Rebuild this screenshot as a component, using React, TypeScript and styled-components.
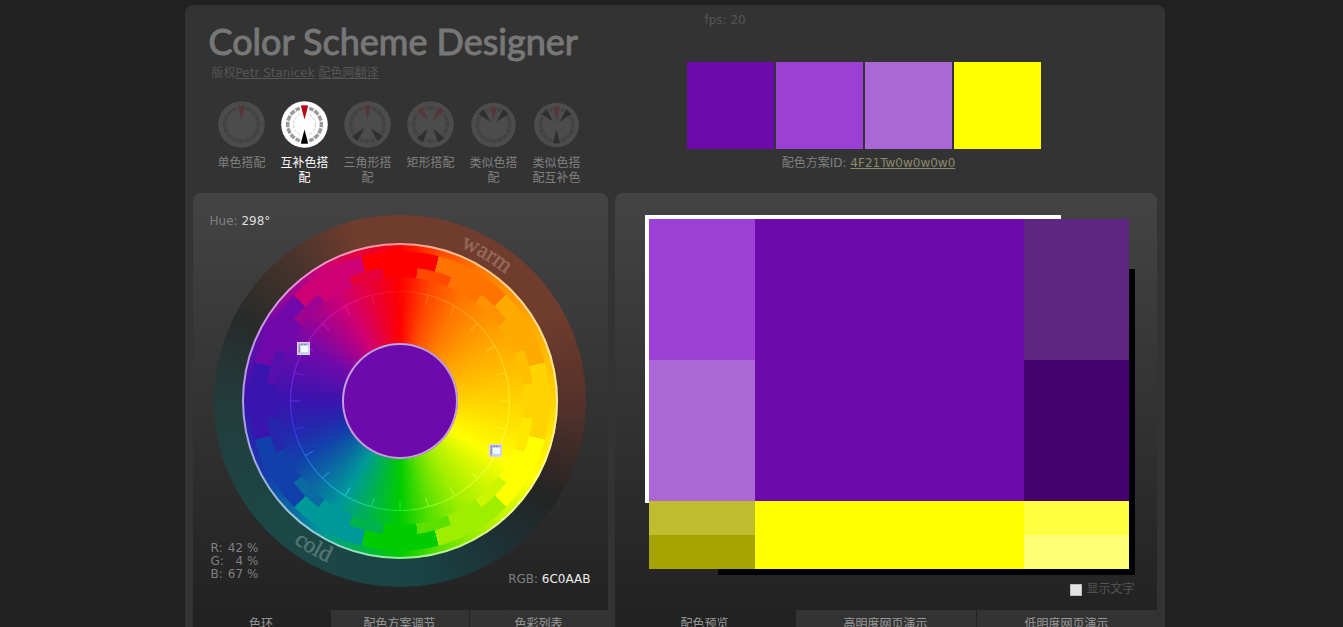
import React from "react";
import styled, { createGlobalStyle } from "styled-components";

const Global = createGlobalStyle`
  * { box-sizing: border-box; }
  body {
    margin: 0;
    background: #212121;
    color: #808080;
    font-family: Verdana, "DejaVu Sans", "Noto Sans CJK SC", sans-serif;
    font-size: 12px;
    line-height: 15px;
  }
  #root { overflow: hidden; }
`;

const Shell = styled.main`
  max-width: 980px;
  margin: 5px auto 0;
  padding: 0 8px;
  border-radius: 8px;
  background: #333;
  position: relative;
  left: 3px;
`;

const Header = styled.header`
  display: grid;
  grid-template-columns: 415px 1fr;
  gap: 7px;
  height: 188px;
`;

const Brand = styled.div`
  padding: 15px 0 0 16px;
`;

const Title = styled.h1`
  margin: 0;
  font: 400 36px/42px Lato, sans-serif;
  color: #777;
  white-space: nowrap;
  -webkit-text-stroke: 1px #777;
`;

const Credit = styled.p`
  margin: 4px 0 0 3px;
  color: #555;
  a { color: #555; }
`;

const Schemes = styled.nav`
  display: flex;
  gap: 7px;
  margin: 20px 0 0 5px;
`;

const SchemeButton = styled.button<{ $active?: boolean }>`
  width: 56px;
  padding: 0 3px;
  border: 0;
  background: none;
  font: inherit;
  color: ${(p) => (p.$active ? "#fff" : "#808080")};
  display: flex;
  flex-direction: column;
  align-items: center;
  justify-content: flex-start;
  gap: 8px;
`;

const Palette = styled.div`
  display: flex;
  flex-direction: column;
  padding: 8px 0 0 72px;
`;

const Fps = styled.div`
  color: #555;
  padding-left: 18px;
`;

const Swatches = styled.div`
  display: flex;
  gap: 2px;
  margin-top: 34px;
`;

const Swatch = styled.div<{ $color: string }>`
  width: 87px;
  height: 87px;
  background: ${(p) => p.$color};
`;

const SchemeId = styled.div`
  width: 364px;
  margin-top: 7px;
  text-align: center;
  a { color: #8a8a6c; }
`;

const Panels = styled.div`
  display: grid;
  grid-template-columns: 415px 1fr;
  gap: 7px;
`;

const Panel = styled.section`
  border-radius: 8px 8px 0 0;
  background: linear-gradient(#444, #222 420px);
  display: flex;
  flex-direction: column;
`;

const Stage = styled.div`
  height: 417px;
  position: relative;
`;

const WheelBox = styled.div`
  display: grid;
  place-items: center;
  padding-top: 22px;
`;

const hues = [
  "#ff0000", "#ff4900", "#ff7400", "#ff9200", "#ffaa00", "#ffbf00",
  "#ffd300", "#ffe800", "#ffff00", "#ccf600", "#9fee00", "#5be000",
  "#00cc00", "#00b34c", "#009999", "#0b6aa2", "#1240ab", "#2626ad",
  "#3914af", "#550fac", "#7109aa", "#9f0490", "#cd0074", "#e6003a",
];
const mainHues = hues.filter((_, i) => i % 2 === 0);

const lighter = [
  "#ff1400", "#ff6e10", "#ff9618", "#ffb020", "#ffc824", "#ffdc20",
  "#fff018", "#fff830", "#ffff60", "#e2ff30", "#baff28", "#84ff20",
  "#18f028", "#10dc8c", "#10d4d4", "#1c90dc", "#2870e4", "#3838e8",
  "#5c30e4", "#7a24e0", "#9a1cdc", "#c010b8", "#f0109a", "#f81060",
];

const smooth = (colors: string[]) => `conic-gradient(${[...colors, colors[0]].join(",")})`;
const stepped = (colors: string[]) => {
  const step = 360 / colors.length;
  return `conic-gradient(from ${-step / 2}deg, ${colors.map((c, i) => `${c} ${i * step}deg ${(i + 1) * step}deg`).join(",")})`;
};
const temperature = `conic-gradient(#703c2d, #703c2d 60deg, #50302a 95deg, #242424 122deg, #1c3438 150deg, #1a4444 175deg, #1c4846 225deg, #223c3b 270deg, #282b2a 298deg, #4c342c 325deg, #703c2d 345deg)`;

const Disc = styled.div<{ $size: number; $fill: string; $ring?: boolean }>`
  grid-area: 1 / 1;
  width: ${(p) => p.$size}px;
  height: ${(p) => p.$size}px;
  border-radius: 50%;
  background: ${(p) => p.$fill};
  ${(p) => p.$ring && "box-shadow: inset 0 0 0 2px rgba(255, 255, 255, 0.6);"}
`;

const WheelMarks = styled.svg`
  grid-area: 1 / 1;
  z-index: 1;
`;

const Hue = styled.div`
  position: absolute;
  left: 17px;
  top: 21px;
  b { font-weight: 400; color: #ddd; }
`;

const Channels = styled.table`
  position: absolute;
  left: 18px;
  bottom: 29px;
  border-spacing: 0;
  line-height: 13px;
  th, td { padding: 0; font-weight: 400; text-align: right; }
  th { text-align: left; padding-right: 4px; }
`;

const Rgb = styled.div`
  position: absolute;
  right: 17px;
  bottom: 23px;
  b { font-weight: 400; color: #eee; }
`;

const Tabs = styled.div<{ $columns: string }>`
  display: grid;
  grid-template-columns: ${(p) => p.$columns};
  height: 32px;
`;

const Tab = styled.button<{ $active?: boolean }>`
  border: 0;
  border-right: 1px solid #222;
  &:last-child { border-right: 0; }
  padding: 0 0 4px;
  font: inherit;
  color: #999;
  background: ${(p) => (p.$active ? "#222" : "#333")};
`;

const Preview = styled.div`
  position: relative;
  display: grid;
  grid-template-columns: 106px 1fr 105px;
  margin: 26px 28px 0 34px;
`;

const WhiteFrame = styled.div`
  position: absolute;
  left: -4px;
  top: -4px;
  width: 416px;
  height: 288px;
  background: #fff;
`;

const BlackFrame = styled.div`
  position: absolute;
  right: -6px;
  bottom: -6px;
  width: 417px;
  height: 306px;
  background: #000;
`;

const Block = styled.div<{ $color: string; $height: number }>`
  height: ${(p) => p.$height}px;
  background: ${(p) => p.$color};
`;

const Column = styled.div`
  position: relative;
`;

const ShowText = styled.label`
  display: flex;
  justify-content: flex-end;
  align-items: center;
  gap: 4px;
  margin: 13px 22px 0 0;
  color: #555;
  input {
    margin: 0;
    width: 12px;
    height: 12px;
    appearance: none;
    background: #e4e4e4;
    border: 1px solid #bbb;
  }
`;

type IconProps = { red: number[]; black: number[]; active?: boolean; size?: number };

const SchemeIcon = ({ red, black, active, size = 47 }: IconProps) => {
  const wedge = (a: number, fill: string) => (
    <path key={`${fill}${a}`} d="M23.5 18.5L19.8 4.6Q23.5 4 27.2 4.6Z" fill={fill} transform={`rotate(${a} 23.5 23.5)`} />
  );
  return (
    <svg width="47" height="47" viewBox="0 0 47 47" aria-hidden="true">
      <g transform={`translate(23.5 ${size === 47 ? 23.5 : 24}) scale(${size / 47}) translate(-23.5 -23.5)`}>
        <circle cx="23.5" cy="23.5" r="23.3" fill={active ? "#fff" : "#4c4c4c"} />
        {Array.from({ length: 16 }, (_, i) => (
          <rect key={i} x="20.8" y="5" width="5.4" height="3.4" fill={active ? "#999" : "#424242"} transform={`rotate(${i * 22.5} 23.5 23.5)`} />
        ))}
        <circle cx="23.5" cy="23.5" r="11" fill="none" stroke={active ? "#ccc" : "#505050"} strokeDasharray="3 1.4" />
        {[...red, ...black].map((a) => (
          <path key={a} d="M23.5 22L17.6 3.6H29.4Z" fill={active ? "#fff" : "#4c4c4c"} transform={`rotate(${a} 23.5 23.5)`} />
        ))}
        {red.map((a) => wedge(a, active ? "#b90010" : "#53373a"))}
        {black.map((a) => wedge(a, active ? "#000" : "#2f2f2f"))}
      </g>
    </svg>
  );
};

const schemes = [
  { label: "单色搭配", red: [0], black: [] },
  { label: "互补色搭配", red: [0], black: [180], active: true },
  { label: "三角形搭配", red: [0], black: [138, 222] },
  { label: "矩形搭配", red: [-34, 34], black: [146, 214] },
  { label: "类似色搭配", red: [0], black: [-43, 43], size: 45 },
  { label: "类似色搭配互补色", red: [0], black: [-43, 43, 180], size: 45 },
];

const Handle = ({ x, y }: { x: number; y: number }) => (
  <g transform={`translate(${x} ${y})`}>
    <rect x="0.5" y="0.5" width="12" height="12" fill="#b9b4d0" stroke="#dcd2ee" />
    <path d="M2.5 10V2.5H10" fill="none" stroke="#8880a8" strokeDasharray="2 1" />
    <rect x="3" y="3" width="9" height="9" fill="#c4d4f4" />
    <rect x="4" y="4" width="7" height="6" fill="#f0fbff" />
  </g>
);

export default function App() {
  return (
    <>
      <Global />
      <Shell>
        <Header>
          <Brand>
            <Title>Color Scheme Designer</Title>
            <Credit>版权<a href="#petr">Petr Stanicek</a> <a href="#peise">配色网翻译</a></Credit>
            <Schemes>
              {schemes.map((s) => (
                <SchemeButton key={s.label} $active={s.active}>
                  <SchemeIcon red={s.red} black={s.black} active={s.active} size={s.size} />
                  {s.label}
                </SchemeButton>
              ))}
            </Schemes>
          </Brand>
          <Palette>
            <Fps>fps: 20</Fps>
            <Swatches>
              {["#6c0aab", "#9b3fd5", "#ab67d5", "#ffff00"].map((c) => <Swatch key={c} $color={c} />)}
            </Swatches>
            <SchemeId>配色方案ID: <a href="#id">4F21Tw0w0w0w0</a></SchemeId>
          </Palette>
        </Header>
        <Panels>
          <Panel>
            <Stage>
              <WheelBox>
                <Disc $size={372} $fill={temperature} />
                <Disc $size={316} $fill={smooth(hues)} $ring />
                <Disc $size={300} $fill={stepped(mainHues)} />
                <Disc $size={268} $fill={stepped(hues)} />
                <Disc $size={248} $fill={smooth(hues)} />
                <Disc $size={220} $fill={smooth(lighter)} />
                <Disc $size={218} $fill={smooth(hues)} />
                <Disc $size={116} $fill="#6c0aab" $ring />
                <WheelMarks width="372" height="372" viewBox="0 0 372 372">
                  {lighter.map((color, i) => (
                    <path key={color} d="M186 77V86" stroke={color} transform={`rotate(${i * 15} 186 186)`} />
                  ))}
                  <path id="warmArc" d="M186 21A165 165 0 0 1 351 186" fill="none" />
                  <path id="coldArc" d="M9 186A177 177 0 0 0 186 363" fill="none" />
                  <g fontFamily="Liberation Serif, serif" fontSize="23" strokeWidth="0.5" textAnchor="middle">
                    <text fill="#94695b" stroke="#94695b"><textPath href="#warmArc" startOffset="34%">warm</textPath></text>
                    <text fill="#557672" stroke="#557672"><textPath href="#coldArc" startOffset="66%">cold</textPath></text>
                  </g>
                  <Handle x={83} y={127} />
                  <Handle x={275} y={229} />
                </WheelMarks>
              </WheelBox>
              <Hue>Hue: <b>298°</b></Hue>
              <Channels>
                <tbody>
                  <tr><th scope="row">R:</th><td>42 %</td></tr>
                  <tr><th scope="row">G:</th><td>4 %</td></tr>
                  <tr><th scope="row">B:</th><td>67 %</td></tr>
                </tbody>
              </Channels>
              <Rgb>RGB: <b>6C0AAB</b></Rgb>
            </Stage>
            <Tabs $columns="138px 139px 1fr">
              <Tab $active>色环</Tab>
              <Tab>配色方案调节</Tab>
              <Tab>色彩列表</Tab>
            </Tabs>
          </Panel>
          <Panel>
            <Stage>
              <Preview>
                <WhiteFrame />
                <BlackFrame />
                <Column>
                  <Block $color="#9b3fd5" $height={141} />
                  <Block $color="#ab67d5" $height={141} />
                  <Block $color="#bfbc30" $height={34} />
                  <Block $color="#a6a300" $height={34} />
                </Column>
                <Column>
                  <Block $color="#6c0aab" $height={282} />
                  <Block $color="#ffff00" $height={68} />
                </Column>
                <Column>
                  <Block $color="#5d2680" $height={141} />
                  <Block $color="#45006f" $height={141} />
                  <Block $color="#ffff40" $height={34} />
                  <Block $color="#ffff73" $height={34} />
                </Column>
              </Preview>
              <ShowText><input type="checkbox" />显示文字</ShowText>
            </Stage>
            <Tabs $columns="181px 181px 1fr">
              <Tab $active>配色预览</Tab>
              <Tab>高明度网页演示</Tab>
              <Tab>低明度网页演示</Tab>
            </Tabs>
          </Panel>
        </Panels>
      </Shell>
    </>
  );
}
